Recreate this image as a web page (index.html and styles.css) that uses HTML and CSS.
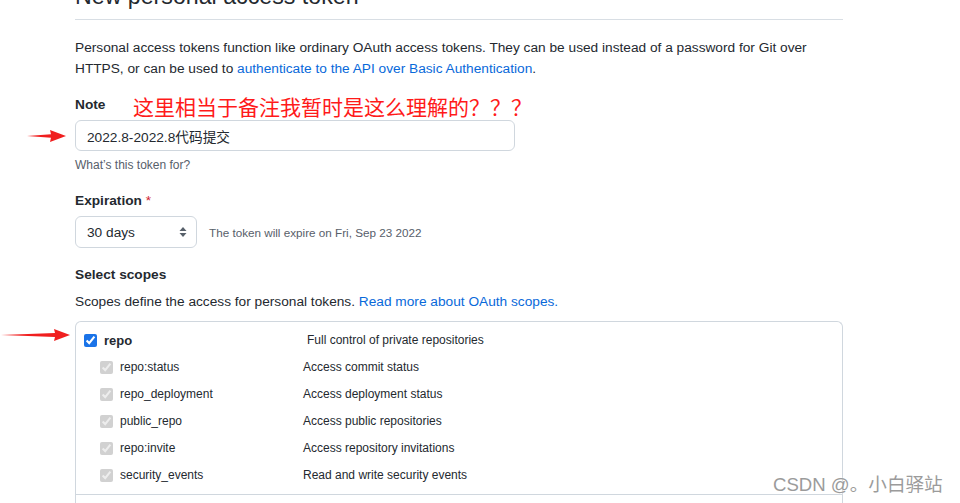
FILE: index.html
```html
<!DOCTYPE html>
<html lang="en">
<head>
<meta charset="utf-8">
<title>New personal access token</title>
<link rel="stylesheet" href="styles.css">
</head>
<body>
<div class="page">
  <div class="subhead"><h2 class="subhead-title">New personal access token</h2></div>

  <p class="intro">Personal access tokens function like ordinary OAuth access tokens. They can be used instead of a password for Git over HTTPS, or can be used to <a href="#">authenticate to the API over Basic Authentication</a>.</p>

  <div class="field note">
    <div class="label-row">
      <label class="label">Note</label>
      <span class="annot">这里相当于备注我暂时是这么理解的？？？</span>
    </div>
    <input class="input" type="text" value="2022.8-2022.8代码提交">
    <p class="hint">What’s this token for?</p>
  </div>

  <div class="field expiration">
    <div class="label-row"><label class="label">Expiration <span class="req">*</span></label></div>
    <div class="expire-row">
      <div class="select">
        <span>30 days</span>
        <svg class="select-arrows" width="8" height="12" viewBox="0 0 8 12"><path d="M4 1 L7.5 5 H0.5 Z M4 11 L7.5 7 H0.5 Z" fill="#57606a"/></svg>
      </div>
      <span class="expire-note">The token will expire on Fri, Sep 23 2022</span>
    </div>
  </div>

  <div class="field scopes">
    <div class="label-row"><label class="label">Select scopes</label></div>
    <p class="scopes-desc">Scopes define the access for personal tokens. <a href="#">Read more about OAuth scopes.</a></p>
    <div class="scope-box">
      <div class="scope-group">
        <div class="scope-row main">
          <label class="scope-name"><input type="checkbox" checked><span>repo</span></label>
          <span class="scope-desc">Full control of private repositories</span>
        </div>
        <div class="scope-row sub">
          <label class="scope-name"><input type="checkbox" checked disabled><span>repo:status</span></label>
          <span class="scope-desc">Access commit status</span>
        </div>
        <div class="scope-row sub">
          <label class="scope-name"><input type="checkbox" checked disabled><span>repo_deployment</span></label>
          <span class="scope-desc">Access deployment status</span>
        </div>
        <div class="scope-row sub">
          <label class="scope-name"><input type="checkbox" checked disabled><span>public_repo</span></label>
          <span class="scope-desc">Access public repositories</span>
        </div>
        <div class="scope-row sub">
          <label class="scope-name"><input type="checkbox" checked disabled><span>repo:invite</span></label>
          <span class="scope-desc">Access repository invitations</span>
        </div>
        <div class="scope-row sub">
          <label class="scope-name"><input type="checkbox" checked disabled><span>security_events</span></label>
          <span class="scope-desc">Read and write security events</span>
        </div>
      </div>
      <div class="scope-group tail"></div>
    </div>
  </div>

  <svg class="arrow arrow-note" width="40" height="14" viewBox="0 0 40 14"><path d="M0 7 L24 5.2 L23 1 L39 7 L23 13 L24 8.8 Z" fill="#f01f1f"/></svg>
  <svg class="arrow arrow-repo" width="70" height="14" viewBox="0 0 70 14"><path d="M0 7 L54 5 L53 1 L69 7 L53 13 L54 9 Z" fill="#f01f1f"/></svg>

  <div class="watermark">CSDN @。小白驿站</div>
</div>
</body>
</html>
```

FILE: styles.css
```css
* { box-sizing: border-box; }

html, body {
  margin: 0;
  padding: 0;
  background: #ffffff;
  overflow: hidden;
}

body {
  font-family: "Liberation Sans", "Noto Sans CJK SC", sans-serif;
  color: #24292f;
  font-size: 13.7px;
  line-height: 21px;
}

a { color: #0969da; text-decoration: none; }

.page {
  position: relative;
  display: flow-root;
  padding-left: 75px;
  width: 843px;
}

.subhead {
  margin-top: -19px;
  padding-bottom: 8px;
  border-bottom: 1px solid #d8dee4;
}

.subhead-title {
  margin: 0;
  font-size: 23.2px;
  line-height: 30px;
  font-weight: 400;
}

.intro {
  margin: 17px 0 0;
}

.field.note { margin-top: 15px; }
.field.expiration { margin-top: 16px; }
.field.scopes { margin-top: 16px; }

.label-row {
  position: relative;
  display: flex;
  align-items: center;
}

.label {
  font-weight: 700;
  font-size: 13.7px;
  line-height: 21px;
}

.req { color: #cf222e; font-weight: 400; }

.annot {
  position: absolute;
  left: 58px;
  top: -2px;
  font-size: 21px;
  line-height: 28px;
  color: #ff1a1a;
  font-family: "Noto Sans CJK SC", sans-serif;
  white-space: nowrap;
}

.input {
  display: block;
  margin-top: 5px;
  width: 440px;
  height: 31px;
  padding: 0 11px;
  border: 1px solid #d0d7de;
  border-radius: 6px;
  font: inherit;
  font-size: 13.7px;
  color: #24292f;
  background: #ffffff;
  outline: none;
}

.hint {
  margin: 5px 0 0;
  font-size: 12px;
  line-height: 18px;
  color: #57606a;
}

.expire-row {
  margin-top: 5px;
  display: flex;
  align-items: center;
  gap: 12px;
}

.select {
  width: 122px;
  height: 32px;
  border: 1px solid #d0d7de;
  border-radius: 6px;
  padding: 0 9px 0 11px;
  display: flex;
  align-items: center;
  justify-content: space-between;
}

.expire-note {
  font-size: 11.7px;
  color: #57606a;
}

.scopes-desc {
  margin: 6px 0 0;
}

.scope-box {
  margin-top: 9px;
  border: 1px solid #d0d7de;
  border-bottom: 0;
  border-radius: 6px 6px 0 0;
}

.scope-group {
  padding: 5px 0 5px;
}

.scope-group.tail {
  height: 40px;
  border-top: 1px solid #d0d7de;
}

.scope-row {
  display: flex;
  align-items: center;
  height: 27px;
  font-size: 12px;
}

.scope-name {
  display: flex;
  align-items: center;
}

.scope-name input {
  margin: 0;
  width: 13px;
  height: 13px;
  accent-color: #1a73e8;
}

.scope-row.main .scope-name {
  padding-left: 8px;
  width: 231px;
  gap: 7px;
  font-size: 13px;
  font-weight: 700;
}

.scope-row.sub .scope-name {
  padding-left: 24px;
  width: 227px;
  gap: 7px;
}

.scope-desc { color: #24292f; }

.arrow { position: absolute; }
.arrow-note { left: 27px; top: 129px; }
.arrow-repo { left: 1px; top: 328px; }

.watermark {
  position: absolute;
  left: 773px;
  top: 472px;
  font-size: 18.6px;
  line-height: 26px;
  color: #9b9b9b;
  white-space: nowrap;
  font-family: "Liberation Sans", "Noto Sans CJK SC", sans-serif;
  text-shadow: 0 0 2px #ffffff;
}
```
